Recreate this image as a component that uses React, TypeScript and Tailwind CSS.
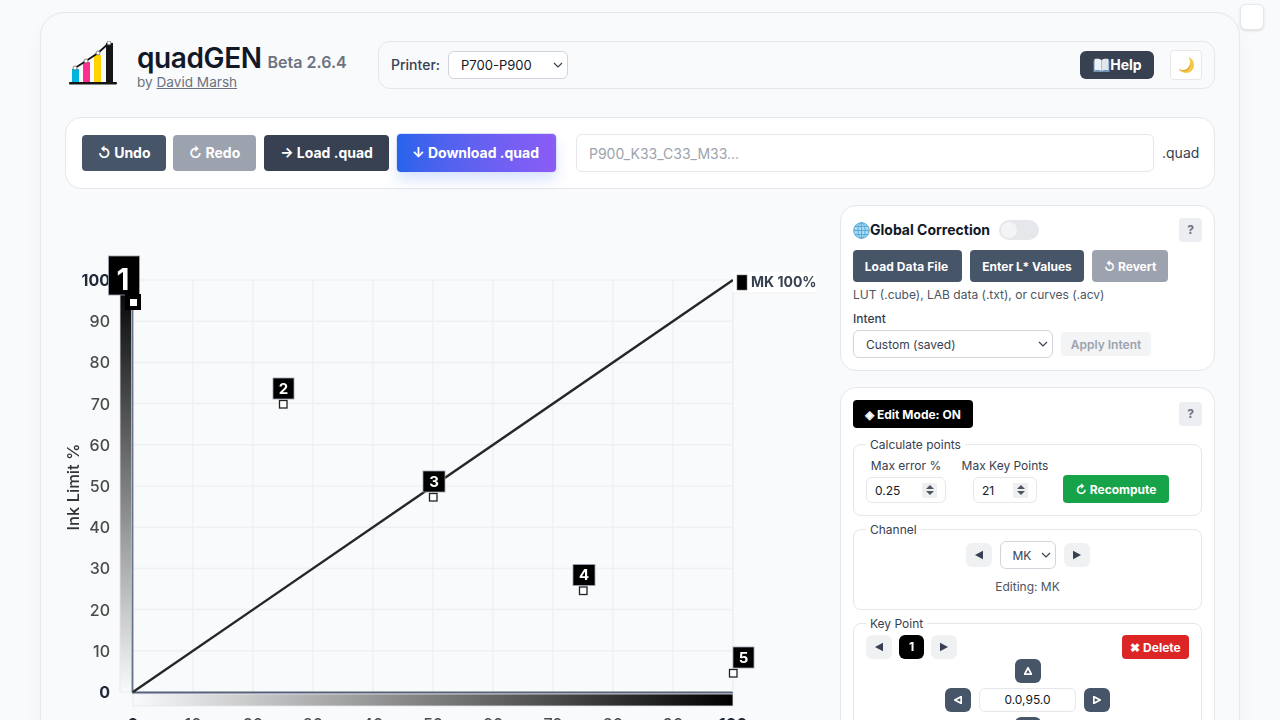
import React from "react";

const Book = () => (
  <svg width="17" height="15" viewBox="0 0 17 15" className="shrink-0">
    <path d="M0.5 2.5 H16.5 V14 H0.5 Z" fill="#6f93b5" />
    <path d="M1.5 1 C4 .3 6.8 .6 8.3 1.8 V13 C6.8 12 4 11.8 1.5 12.4 Z" fill="#eef2f6" />
    <path d="M15.5 1 C13 .3 10.2 .6 8.7 1.8 V13 C10.2 12 13 11.8 15.5 12.4 Z" fill="#dfe6ec" />
  </svg>
);

const Globe = () => (
  <svg width="17" height="17" viewBox="0 0 17 17" className="shrink-0" fill="none">
    <circle cx="8.5" cy="8.5" r="8" fill="#a9dcf2" />
    <g stroke="#4fa6d6" strokeWidth="0.9">
      <circle cx="8.5" cy="8.5" r="7.8" />
      <ellipse cx="8.5" cy="8.5" rx="3.6" ry="7.8" />
      <path d="M8.5 .7 V16.3 M.7 8.5 H16.3 M1.8 4.5 H15.2 M1.8 12.5 H15.2" />
    </g>
  </svg>
);

const Moon = () => (
  <svg width="18" height="18" viewBox="0 0 18 18">
    <path d="M11.5 1 C14 2 17 4.6 17 9 C17 13.6 13.4 17 9 17 C5.6 17 2.8 15 1.5 12.6 C3 13.8 5 14.4 7 14 C10.6 13.4 13 10.4 13 7 C13 4.6 12.4 2.6 11.5 1 Z" fill="#f6c94a" />
    <path d="M1.5 12.6 C3 13.8 5 14.4 7 14 C10.6 13.4 13 10.4 13 7 C14 10 12.6 14 9 15.2 C6 16.2 3 15 1.5 12.6 Z" fill="#e8a92f" />
  </svg>
);

const Logo = () => (
  <svg width="48" height="44" viewBox="69 41 48 44" className="block">
    <rect x="72" y="69" width="7" height="13" fill="#00b4e0" />
    <rect x="83" y="62" width="7" height="20" fill="#ff2d8e" />
    <rect x="94" y="55" width="7" height="27" fill="#ffd400" />
    <rect x="106" y="43" width="7" height="39" fill="#161616" />
    <rect x="69" y="82" width="48" height="2.4" rx="1" fill="#161616" />
    <path d="M75 68 L86 61 L98 53 L109 43" stroke="#161616" strokeWidth="1.8" fill="none" />
    {[
      [75, 68],
      [86, 61],
      [98, 53],
      [109, 43],
    ].map(([x, y]) => (
      <circle key={x} cx={x} cy={y} r="2" fill="#fff" stroke="#555" strokeWidth="0.7" />
    ))}
  </svg>
);

const Spinner = () => (
  <span className="flex h-[15px] w-[15px] flex-col items-center justify-center gap-[2px] bg-[#efefef]">
    <svg width="8" height="4" viewBox="0 0 8 4"><path d="M4 0 L8 4 H0 Z" fill="#4b5563" /></svg>
    <svg width="8" height="4" viewBox="0 0 8 4"><path d="M0 0 H8 L4 4 Z" fill="#4b5563" /></svg>
  </span>
);

const Tri = ({ dir, hollow }: { dir: "l" | "r" | "u"; hollow?: boolean }) => {
  const d = dir === "l" ? "M1 5 L9 0.8 V9.2 Z" : dir === "r" ? "M9 5 L1 0.8 V9.2 Z" : "M5 1 L9.2 9 H0.8 Z";
  const s = hollow ? 8 : 10;
  return (
    <svg width={s} height={s} viewBox="0 0 10 10">
      <path d={d} fill={hollow ? "none" : "#374151"} stroke={hollow ? "#fff" : "none"} strokeWidth={hollow ? 2.2 : 0} />
    </svg>
  );
};

const GrayBtn = ({ dir }: { dir: "l" | "r" }) => (
  <button className="flex h-6 w-[26px] items-center justify-center rounded-md bg-[#f0f1f3]">
    <Tri dir={dir} />
  </button>
);

const SlateBtn = ({ dir }: { dir: "l" | "r" | "u" }) => (
  <button className="flex h-6 w-[26px] items-center justify-center rounded-md bg-[#475569]">
    <Tri dir={dir} hollow />
  </button>
);

const Help = () => (
  <button className="flex h-6 w-[23px] items-center justify-center rounded bg-[#eceef1] text-xs font-bold text-[#6b7280]">?</button>
);

const Chevron = () => (
  <svg width="10" height="6" viewBox="0 0 10 6" fill="none" className="pointer-events-none absolute right-[3px] top-1/2 -translate-y-1/2">
    <path d="M1 1 L5 5 L9 1" stroke="#374151" strokeWidth="1.2" />
  </svg>
);

const Select = ({ width, text, size }: { width: string; text: string; size: string }) => (
  <span className={`relative block shrink-0 ${width}`}>
    <select className={`block h-7 w-full appearance-none rounded-md border border-[#d1d5db] bg-white pl-3 pr-4 pt-px ${size}`}>
      <option>{text}</option>
    </select>
    <span className="absolute right-[2px] top-0 h-7 w-4"><Chevron /></span>
  </span>
);

const Chart = () => {
  const xs = Array.from({ length: 11 }, (_, i) => i);
  const px = (v: number) => 133 + v * 60;
  const py = (v: number) => 692 - v * 41.2;
  const pts = [
    { n: 2, x: 283.5, y: 404.5, bx: 273, by: 378, w: 21, h: 21 },
    { n: 3, x: 433.5, y: 497.5, bx: 423, by: 471, w: 22, h: 21 },
    { n: 4, x: 583.5, y: 591, bx: 573, by: 564.5, w: 22, h: 21 },
    { n: 5, x: 733.5, y: 673.5, bx: 733, by: 647, w: 21, h: 21 },
  ];
  return (
    <svg width="751" height="540" viewBox="65 205 751 540" className="block shrink-0 overflow-hidden blur-[0.3px]">
      <defs>
        <linearGradient id="gv" x1="0" y1="0" x2="0" y2="1">
          <stop offset="0" stopColor="#000" />
          <stop offset="1" stopColor="#000" stopOpacity="0" />
        </linearGradient>
        <linearGradient id="gh" x1="0" y1="0" x2="1" y2="0">
          <stop offset="0" stopColor="#000" stopOpacity="0" />
          <stop offset="1" stopColor="#000" />
        </linearGradient>
      </defs>
      {xs.map((i) => (
        <g key={i} stroke="#eff0f3" strokeWidth="1.5">
          <line x1={px(i)} y1={280} x2={px(i)} y2={692} />
          <line x1={133} y1={py(i)} x2={733} y2={py(i)} />
        </g>
      ))}
      <rect x="120" y="280" width="11.5" height="412" fill="url(#gv)" stroke="#e5e7eb" strokeWidth="0.8" />
      <rect x="133" y="694" width="600" height="12" fill="url(#gh)" stroke="#e5e7eb" strokeWidth="0.8" />
      <line x1="132.5" y1="280" x2="132.5" y2="692.5" stroke="#64748b" strokeWidth="1.8" />
      <line x1="132" y1="692.5" x2="733" y2="692.5" stroke="#55637a" strokeWidth="1.8" />
      <line x1="133" y1="692" x2="733" y2="280" stroke="#262626" strokeWidth="2.4" />
      {xs.map((i) => (
        <text
          key={i}
          x={110}
          y={py(i) + 6}
          textAnchor="end"
          fontFamily="Inter, sans-serif"
          fontSize="16"
          fontWeight={i === 0 || i === 10 ? 700 : 500}
          fill={i === 0 || i === 10 ? "#1f2937" : "#4b4b4b"}
        >
          {i * 10}
        </text>
      ))}
      {xs.map((i) => (
        <text
          key={i}
          x={px(i)}
          y={729.5}
          textAnchor="middle"
          fontFamily="Inter, sans-serif"
          fontSize="16"
          fontWeight={i === 0 || i === 10 ? 700 : 500}
          fill={i === 0 || i === 10 ? "#1f2937" : "#4b4b4b"}
        >
          {i * 10}
        </text>
      ))}
      <text
        transform="translate(79 487) rotate(-90)"
        textAnchor="middle"
        fontFamily="Inter, sans-serif"
        fontSize="16.5"
        fontWeight="500"
        fill="#333"
      >
        Ink Limit %
      </text>
      <rect x="733" y="272" width="83" height="21" fill="#ffffff" />
      <line x1="733" y1="293" x2="816" y2="293" stroke="#eff0f3" strokeWidth="1" />
      <line x1="733" y1="293" x2="733" y2="692" stroke="#eff0f3" strokeWidth="1.5" />
      <rect x="108.5" y="256" width="31" height="39" fill="#000" stroke="#9ca3af" strokeWidth="0.8" />
      <text x="123" y="290" textAnchor="middle" fontFamily="Inter, sans-serif" fontSize="30" fontWeight="700" fill="#fff">1</text>
      <rect x="125" y="294" width="16" height="16" fill="#000" />
      <rect x="130" y="299" width="7" height="7" fill="#fff" />
      {pts.map((p) => (
        <g key={p.n}>
          <rect x={p.bx} y={p.by} width={p.w} height={p.h} fill="#000" stroke="#9ca3af" strokeWidth="0.8" />
          <text x={p.bx + p.w / 2} y={p.by + 15.5} textAnchor="middle" fontFamily="Inter, sans-serif" fontSize="15" fontWeight="700" fill="#fff">{p.n}</text>
          <rect x={p.x - 4} y={p.y - 4} width="7.5" height="7.5" fill="#fff" stroke="#222" strokeWidth="1.3" />
        </g>
      ))}
      <rect x="737" y="275" width="10" height="15" fill="#000" stroke="#777" strokeWidth="0.6" />
      <text x="751" y="287" fontFamily="Inter, sans-serif" fontSize="14" fontWeight="700" fill="#374151">MK 100%</text>
    </svg>
  );
};

export default function App() {
  return (
    <div className="relative h-[720px] overflow-hidden bg-[#f8fafc] font-['Inter',sans-serif] text-[#111827]">
      <div className="absolute left-[1240px] top-[4px] h-[26px] w-6 rounded-md border border-[#e5e7eb] bg-white shadow-sm" />
      <div className="mx-10 mt-3 rounded-t-3xl border border-[#e5e7eb] bg-[#f9fafb] px-6 pt-7 shadow-[0_10px_20px_rgba(0,0,0,0.03)]">
        <header className="flex h-12 items-center">
          <div className="mb-1 ml-[4px] w-[68px] shrink-0"><Logo /></div>
          <div className="mt-[3px] w-[241px] shrink-0">
            <div className="flex items-baseline gap-[6px] leading-none">
              <span className="text-[28px] font-semibold leading-[30px] tracking-[-0.4px] text-[#111827]">quadGEN</span>
              <span className="text-base font-semibold text-[#6b7280]">Beta 2.6.4</span>
            </div>
            <div className="text-[13.6px] leading-[17px] text-[#6b7280]">
              by <span className="underline">David Marsh</span>
            </div>
          </div>
          <div className="flex h-12 flex-1 items-center rounded-xl border border-[#e5e7eb] pl-3 pr-3">
            <span className="mr-2 text-sm font-medium text-[#374151]">Printer:</span>
            <Select width="w-[120px]" text="P700-P900" size="text-[13px] text-[#111827]" />
            <div className="flex-1" />
            <button className="flex h-7 w-[74px] items-center justify-center rounded-md bg-[#374151] pl-[1px] text-sm font-bold text-white">
              <Book />Help
            </button>
            <button className="ml-4 flex h-[30px] w-8 items-center justify-center rounded border border-[#e5e7eb] bg-white">
              <Moon />
            </button>
          </div>
        </header>

        <div className="mt-7 flex h-[72px] items-center rounded-2xl border border-[#e5e7eb] bg-white pl-4 pr-4">
          <button className="h-9 w-[84px] rounded bg-[#475569] text-sm font-bold text-white">↺ Undo</button>
          <button className="ml-[7px] h-9 w-[83px] rounded bg-[#9ca3af] text-sm font-bold text-white">↻ Redo</button>
          <button className="ml-2 h-9 w-[125px] rounded bg-[#374151] text-sm font-bold text-white">→ Load .quad</button>
          <button className="ml-2 h-[38px] w-[159px] rounded bg-gradient-to-r from-[#2563eb] to-[#8b5cf6] pr-[2px] text-sm font-bold text-white shadow-[0_0_0_1px_#dbe3fb,0_8px_14px_rgba(37,99,235,0.18)]">↓ Download .quad</button>
          <input
            readOnly
            placeholder="P900_K33_C33_M33..."
            className="ml-5 h-[38px] min-w-0 flex-1 rounded-md border border-[#e5e7eb] bg-white px-3 text-sm text-[#111827] placeholder:text-[#9ca3af]"
          />
          <span className="ml-2 w-9 text-sm text-[#374151]">.quad</span>
        </div>

        <div className="mt-4 flex gap-6">
          <Chart />
          <div className="flex w-[375px] shrink-0 flex-col gap-4">
            <section className="h-[166px] rounded-2xl border border-[#e5e7eb] bg-white px-3 pt-3">
              <div className="flex h-6 items-center">
                <Globe />
                <span className="text-sm font-bold text-[#111827]">Global Correction</span>
                <span className="ml-[9px] flex h-5 w-10 items-center rounded-full bg-[#e5e7eb] pl-[2px]">
                  <span className="h-4 w-4 rounded-full bg-[#f3f4f6]" />
                </span>
                <span className="flex-1" />
                <Help />
              </div>
              <div className="mt-2 flex gap-2">
                <button className="h-8 w-[109px] rounded bg-[#475569] pt-px pr-[2px] text-xs font-bold tracking-[0.1px] text-white">Load Data File</button>
                <button className="h-8 w-[114px] rounded bg-[#475569] pt-px text-xs font-bold text-white">Enter L* Values</button>
                <button className="h-8 w-[76px] rounded bg-[#9ca3af] pt-px text-xs font-bold text-white">↺ Revert</button>
              </div>
              <p className="mt-[5px] text-xs leading-4 text-[#4b5563]">LUT (.cube), LAB data (.txt), or curves (.acv)</p>
              <p className="mt-[8px] text-xs font-medium leading-4 text-[#374151]">Intent</p>
              <div className="mt-[3px] flex items-center gap-2">
                <Select width="w-[200px]" text="Custom (saved)" size="text-xs text-[#374151]" />
                <button className="h-6 w-[90px] rounded bg-[#f3f4f6] pt-px text-xs font-semibold text-[#9ca3af]">Apply Intent</button>
              </div>
            </section>

            <section className="rounded-2xl border border-[#e5e7eb] bg-white px-3 pt-3">
              <div className="flex items-center justify-between">
                <button className="h-7 w-[120px] rounded bg-black pt-px text-xs font-bold text-white">◈ Edit Mode: ON</button>
                <Help />
              </div>
              <fieldset className="mt-2 h-[80px] rounded-lg border border-[#e5e7eb] px-3">
                <legend className="translate-y-px px-1 text-xs leading-4 text-[#374151]">Calculate points</legend>
                <div className="mt-[5px] flex items-end gap-4">
                  <label className="flex w-[80px] flex-col items-center text-xs text-[#374151]">
                    <span className="translate-y-px whitespace-nowrap leading-4">Max error %</span>
                    <span className="mt-1 flex h-[26px] w-[80px] items-center justify-between rounded-md border border-[#e5e7eb] bg-white pl-2 pr-2 text-xs text-[#111827]"><span className="pt-px">0.25</span><Spinner /></span>
                  </label>
                  <label className="flex w-[86px] flex-col items-center text-xs text-[#374151]">
                    <span className="translate-y-px whitespace-nowrap leading-4">Max Key Points</span>
                    <span className="mt-1 flex h-[26px] w-[64px] items-center justify-between rounded-md border border-[#e5e7eb] bg-white pl-2 pr-2 text-xs text-[#111827]"><span className="pt-px">21</span><Spinner /></span>
                  </label>
                  <button className="-ml-[1px] h-7 w-[106px] rounded bg-[#16a34a] pt-px text-xs font-bold text-white">↻ Recompute</button>
                </div>
              </fieldset>
              <fieldset className="mt-[5px] h-[89px] rounded-lg border border-[#e5e7eb] px-3">
                <legend className="translate-y-px px-1 text-xs leading-4 text-[#374151]">Channel</legend>
                <div className="mt-1 flex items-center justify-center gap-2">
                  <GrayBtn dir="l" />
                  <Select width="w-[56px]" text="MK" size="text-xs text-[#374151]" />
                  <GrayBtn dir="r" />
                </div>
                <p className="mt-[10px] text-center text-xs leading-4 text-[#4b5563]">Editing: MK</p>
              </fieldset>
              <fieldset className="mt-[5px] h-[140px] rounded-lg border border-[#e5e7eb] px-3">
                <legend className="translate-y-px px-1 text-xs leading-4 text-[#374151]">Key Point</legend>
                <div className="mt-1 flex items-center">
                  <GrayBtn dir="l" />
                  <span className="ml-[7px] flex h-6 w-[25px] items-center justify-center rounded-md bg-black text-xs font-bold text-white">1</span>
                  <span className="ml-[7px]"><GrayBtn dir="r" /></span>
                  <span className="flex-1" />
                  <button className="h-6 w-[67px] rounded bg-[#dc2626] pt-px text-xs font-bold text-white">✖ Delete</button>
                </div>
                <div className="flex justify-center"><SlateBtn dir="u" /></div>
                <div className="mt-[5px] flex items-center justify-center gap-2">
                  <SlateBtn dir="l" />
                  <span className="flex h-6 w-[97px] items-center justify-center rounded-md border border-[#e5e7eb] text-xs text-[#111827]">0.0,95.0</span>
                  <SlateBtn dir="r" />
                </div>
                <div className="mt-[5px] flex justify-center"><span className="block h-6 w-[26px] rounded-md bg-[#475569]" /></div>
              </fieldset>
            </section>
          </div>
        </div>
      </div>
    </div>
  );
}
